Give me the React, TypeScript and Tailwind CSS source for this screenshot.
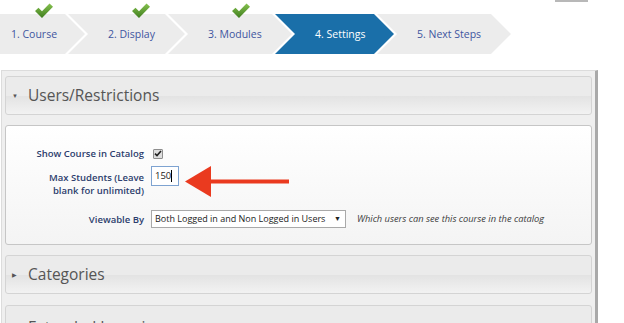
import React from "react";

type Step = { label: string; width: number; done: boolean; active: boolean; first: boolean };

const STEPS: Step[] = [
  { label: "1. Course",     width: 85,  done: true,  active: false, first: true  },
  { label: "2. Display",    width: 117, done: true,  active: false, first: false },
  { label: "3. Modules",    width: 124, done: true,  active: false, first: false },
  { label: "4. Settings",   width: 119, done: false, active: true,  first: false },
  { label: "5. Next Steps", width: 134, done: false, active: false, first: false },
];

function Check() {
  return (
    <svg width="18" height="15" viewBox="0 0 18 15" className="absolute -top-[11px]">
      <defs>
        <linearGradient id="ck" x1="0" y1="0" x2="0" y2="1">
          <stop offset="0" stopColor="#86c24f" />
          <stop offset="1" stopColor="#3f7d1e" />
        </linearGradient>
      </defs>
      <path d="M0 8 L3.5 4.8 L7 8.2 L14.5 0.5 L18 3.8 L7 15 Z" fill="url(#ck)" />
    </svg>
  );
}

function StepBar() {
  return (
    <div className="flex h-[40px] mt-[14px]">
      {STEPS.map((s) => (
        <div key={s.label} className="relative -mr-[17px] shrink-0" style={{ width: s.width }}>
          <div
            className={`h-full flex items-center pt-[1px] text-[10.5px] ${
              s.first ? "pl-[11px]" : "pl-[40px]"
            } ${s.active ? "bg-[#1a6fa9] text-white" : "bg-[#ececec] text-[#3e55a0]"} ${
              s.first
                ? "[clip-path:polygon(0_0,calc(100%-20px)_0,100%_50%,calc(100%-20px)_100%,0_100%)]"
                : "[clip-path:polygon(0_0,calc(100%-20px)_0,100%_50%,calc(100%-20px)_100%,0_100%,20px_50%)]"
            }`}
          >
            {s.label}
          </div>
          {s.done && (
            <div className={`absolute top-0 ${s.first ? "left-[35px]" : "left-[64px]"}`}>
              <Check />
            </div>
          )}
        </div>
      ))}
    </div>
  );
}

function SectionHeader({ title, open, low }: { title: string; open: boolean; low?: boolean }) {
  return (
    <div
      className={`h-[39px] mx-[3px] flex items-center rounded-[3px] border border-[#d4d4d4] bg-[linear-gradient(to_bottom,#ebebeb_0%,#ebebeb_50%,#e3e3e3_52%,#f2f2f2_100%)] ${
        low ? "pt-[6px]" : "pt-[1px]"
      }`}
    >
      <span className="w-[22px] pl-[6px] text-[#555] text-[6px] leading-none">{open ? "▼" : "▶"}</span>
      <span className="text-[15.5px] text-[#555]">{title}</span>
    </div>
  );
}

function Label({ children }: { children: React.ReactNode }) {
  return <div className="text-right font-semibold text-[9.5px] leading-[13px] text-[#2c3d6d]">{children}</div>;
}

export default function App() {
  return (
    <div className="relative w-[624px] h-[323px] overflow-hidden bg-white font-['Open_Sans',sans-serif]">
      <div className="absolute left-[555px] top-0 w-[33px] h-[2px] bg-[#b8b8b8]" />
      <StepBar />

      {/* Panel */}
      <div className="mt-[16px] ml-[1px] w-[597px] h-[300px] border border-[#dcdcdc] border-r-[3px] border-r-[#a9a9a9] bg-[#efefef] pt-[5px]">
        <SectionHeader title="Users/Restrictions" open />

        <div className="relative mx-[3px] mt-[10px] h-[120px] rounded-[3px] border border-[#c6c6c6] bg-[linear-gradient(to_bottom,#ffffff,#f4f4f4)] pt-[21px]">
          <div className="grid grid-cols-[138px_auto] gap-x-[7px] items-center">
            <Label>Show Course in Catalog</Label>
            <div className="h-[13px] flex items-center">
              <span className="ml-[2px] w-[10px] h-[10px] rounded-[1px] border border-[#8e8e8e] bg-[#dedede] flex items-center justify-center">
                <svg width="8" height="7" viewBox="0 0 8 7">
                  <path d="M1 3.6 L3 5.6 L7 1" stroke="#222" strokeWidth="1.6" fill="none" />
                </svg>
              </span>
            </div>

            <div className="mt-[11px]">
              <Label>
                Max Students (Leave
                <br />
                blank for unlimited)
              </Label>
            </div>
            <div className="mt-[11px] self-start">
              <div className="w-[28px] h-[20px] border border-[#7ea3d1] bg-white flex items-center pl-[3px] text-[9.5px] text-[#222] mt-[-5px]">
                150<span className="w-px h-[12px] bg-black" />
              </div>
            </div>

            <div className="mt-[13px]">
              <Label>Viewable By</Label>
            </div>
            <div className="mt-[13px] flex items-center">
              <div className="w-[195px] h-[18px] border border-[#a9a9a9] bg-white flex items-center justify-between pl-[3px] pr-[4px] text-[9px] text-[#222] whitespace-nowrap">
                <span>Both Logged in and Non Logged in Users</span>
                <span className="text-[7px]">▼</span>
              </div>
              <span className="ml-[11px] italic text-[9.3px] text-[#3a3a3a] whitespace-nowrap">Which users can see this course in the catalog</span>
            </div>
          </div>

          {/* annotation arrow */}
          <svg className="absolute left-[179px] top-[40px]" width="106" height="32" viewBox="0 0 106 32">
            <polygon points="0,15.5 26,0 26,31" fill="#ea3a1f" />
            <rect x="24" y="13.5" width="80" height="4" fill="#ea3a1f" />
          </svg>
        </div>

        <div className="mt-[10px]">
          <SectionHeader title="Categories" open={false} />
        </div>
        <div className="mt-[11px]">
          <SectionHeader title="Extended Learning" open={false} low />
        </div>
      </div>
    </div>
  );
}
